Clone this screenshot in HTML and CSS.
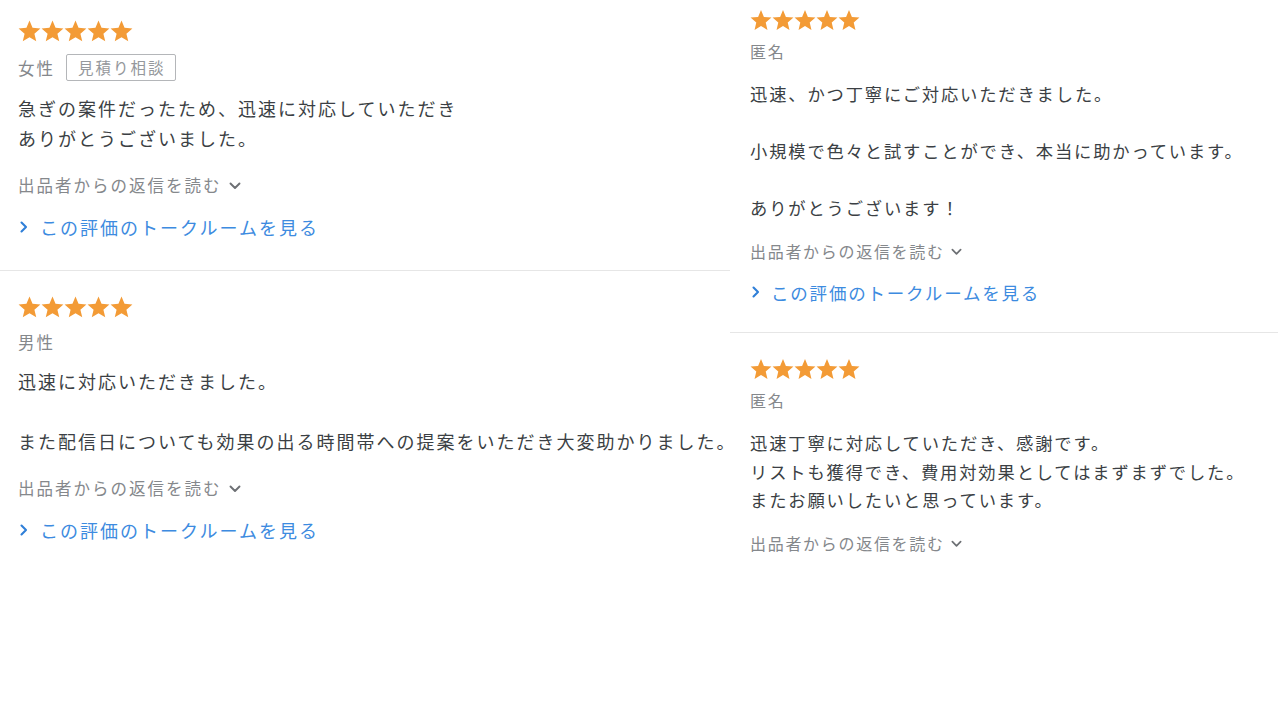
FILE: index.html
```html
<!DOCTYPE html>
<html lang="ja">
<head>
<meta charset="utf-8">
<title>評価</title>
<link rel="stylesheet" href="styles.css">
</head>
<body>
<svg width="0" height="0" class="defs">
  <defs>
    <symbol id="star" viewBox="0 0 24 23"><polygon points="12,0.6 15.17,8.23 23.41,8.89 17.14,14.27 19.05,22.31 12,18 4.95,22.31 6.86,14.27 0.59,8.89 8.83,8.23"/></symbol>
    <symbol id="down" viewBox="0 0 12 8"><polyline points="1.5,1.5 6,6 10.5,1.5"/></symbol>
    <symbol id="right" viewBox="0 0 8 12"><polyline points="1.5,1.5 6,6 1.5,10.5"/></symbol>
  </defs>
</svg>
<main class="page">
  <section class="col col-left">
    <article class="card">
      <div class="stars"><svg><use href="#star"/></svg><svg><use href="#star"/></svg><svg><use href="#star"/></svg><svg><use href="#star"/></svg><svg><use href="#star"/></svg></div>
      <div class="meta"><span class="who">女性</span><span class="tag">見積り相談</span></div>
      <p class="body">急ぎの案件だったため、迅速に対応していただき<br>ありがとうございました。</p>
      <div class="reply">出品者からの返信を読む<svg class="chev-down"><use href="#down"/></svg></div>
      <a class="link" href="#"><svg class="chev-right"><use href="#right"/></svg>この評価のトークルームを見る</a>
    </article>
    <article class="card">
      <div class="stars"><svg><use href="#star"/></svg><svg><use href="#star"/></svg><svg><use href="#star"/></svg><svg><use href="#star"/></svg><svg><use href="#star"/></svg></div>
      <div class="meta"><span class="who">男性</span></div>
      <p class="body">迅速に対応いただきました。<br><br>また配信日についても効果の出る時間帯への提案をいただき大変助かりました。</p>
      <div class="reply">出品者からの返信を読む<svg class="chev-down"><use href="#down"/></svg></div>
      <a class="link" href="#"><svg class="chev-right"><use href="#right"/></svg>この評価のトークルームを見る</a>
    </article>
  </section>
  <section class="col col-right">
    <article class="card">
      <div class="stars"><svg><use href="#star"/></svg><svg><use href="#star"/></svg><svg><use href="#star"/></svg><svg><use href="#star"/></svg><svg><use href="#star"/></svg></div>
      <div class="meta"><span class="who">匿名</span></div>
      <p class="body">迅速、かつ丁寧にご対応いただきました。<br><br>小規模で色々と試すことができ、本当に助かっています。<br><br>ありがとうございます！</p>
      <div class="reply">出品者からの返信を読む<svg class="chev-down"><use href="#down"/></svg></div>
      <a class="link" href="#"><svg class="chev-right"><use href="#right"/></svg>この評価のトークルームを見る</a>
    </article>
    <article class="card">
      <div class="stars"><svg><use href="#star"/></svg><svg><use href="#star"/></svg><svg><use href="#star"/></svg><svg><use href="#star"/></svg><svg><use href="#star"/></svg></div>
      <div class="meta"><span class="who">匿名</span></div>
      <p class="body">迅速丁寧に対応していただき、感謝です。<br>リストも獲得でき、費用対効果としてはまずまずでした。<br>またお願いしたいと思っています。</p>
      <div class="reply">出品者からの返信を読む<svg class="chev-down"><use href="#down"/></svg></div>
    </article>
  </section>
</main>
</body>
</html>
```
FILE: styles.css
```css
* { box-sizing: border-box; }
html, body { margin: 0; padding: 0; background: #fff; }
body {
  font-family: "Noto Sans CJK JP", "Noto Sans", sans-serif;
  color: #3b3f44;
}
.defs { position: absolute; width: 0; height: 0; overflow: hidden; }
.page { display: flex; align-items: flex-start; width: 1280px; }

.col { display: flex; flex-direction: column; }
.col-left { width: 730px; }
.col-right { width: 548px; }

.card {
  display: flex;
  flex-direction: column;
  align-items: flex-start;
  border-bottom: 1px solid #e6e6e6;
}
.card:last-child { border-bottom: none; }

.stars { display: flex; }
.stars svg { fill: #f39b36; }

.meta { display: flex; align-items: center; color: #85888c; white-space: nowrap; }
.tag {
  border: 1px solid #b4b6b9;
  border-radius: 2px;
  color: #95989c;
}

.body { margin: 0; white-space: nowrap; }

.reply { display: flex; align-items: center; color: #85888c; white-space: nowrap; }
.chev-down { fill: none; stroke: #6d7074; stroke-width: 1.9; stroke-linecap: round; stroke-linejoin: round; }

.link { display: flex; align-items: center; color: #3d8be0; text-decoration: none; white-space: nowrap; }
.chev-right { fill: none; stroke: #2f7fd8; stroke-width: 2.1; stroke-linecap: round; stroke-linejoin: round; }

/* Left column scale */
.col-left .card { padding: 25px 0 29px 18px; }
.col-left .card:first-child { padding-top: 20px; }
.col-left .stars svg { width: 23px; height: 22px; }
.col-left .meta { margin-top: 12px; line-height: 24px; font-size: 16.5px; letter-spacing: 2px; }
.col-left .tag { margin-left: 11px; height: 27px; line-height: 25px; padding: 0 9px 0 11px; font-size: 15.5px; letter-spacing: 2px; }
.col-left .body { margin-top: 12px; font-size: 18px; line-height: 30px; letter-spacing: 2px; }
.col-left .reply { margin-top: 19px; height: 26px; font-size: 16.5px; letter-spacing: 2px; }
.col-left .chev-down { width: 12px; height: 8px; margin-left: 7px; margin-top: 2px; }
.col-left .link { margin-top: 15px; height: 28px; font-size: 18px; letter-spacing: 2px; }
.col-left .chev-right { width: 8px; height: 12px; margin-left: 2px; margin-right: 12px; }

/* Right column scale */
.col-right .card { padding: 25px 0 26px 20px; }
.col-right .card:first-child { padding-top: 9px; }
.col-right .stars svg { width: 22px; height: 22px; }
.col-right .meta { margin-top: 8px; line-height: 25px; font-size: 16px; letter-spacing: 1.7px; }
.col-right .body { margin-top: 16px; font-size: 17.3px; line-height: 28.6px; letter-spacing: 1.85px; }
.col-right .reply { margin-top: 16px; height: 25px; font-size: 16px; letter-spacing: 1.7px; }
.col-right .chev-down { width: 11px; height: 8px; margin-left: 6px; margin-top: 2px; }
.col-right .link { margin-top: 15px; height: 27px; font-size: 17.5px; letter-spacing: 1.8px; }
.col-right .chev-right { width: 8px; height: 12px; margin-left: 2px; margin-right: 11px; }
```
